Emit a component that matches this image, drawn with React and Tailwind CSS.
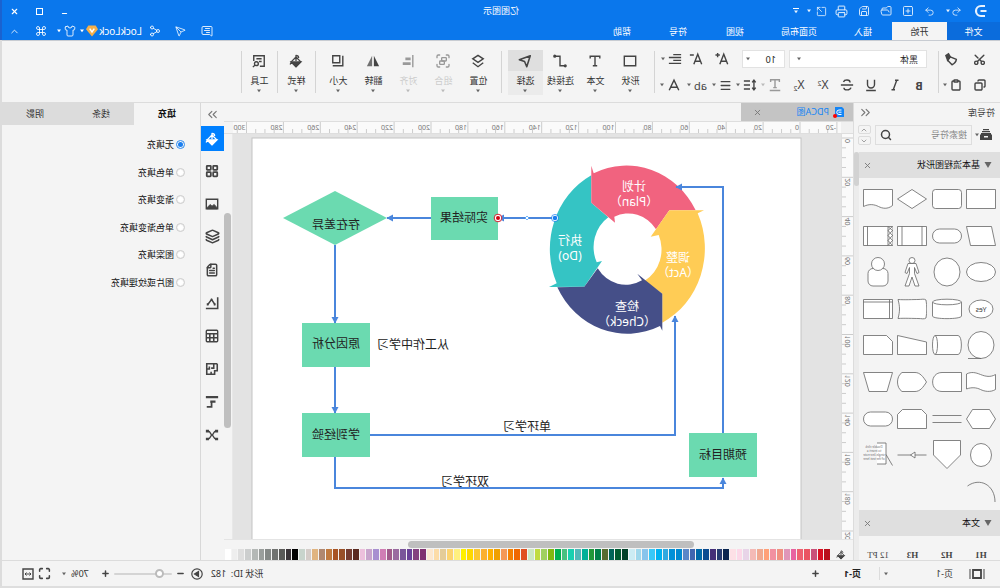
import { useState } from "react";
import {
    Undo2, Redo2, SquarePlus, FolderOpen, Save, Printer, SquareArrowOutUpRight, Minus, Plus, X,
    MessageSquareText, Send, Share2, Shirt, Command, ChevronUp, ChevronDown, ChevronsLeft, ChevronsRight, Scissors, Copy, Clipboard,
    Menu, Layers, Group, Maximize, Search, FileText, LayoutGrid,
} from "lucide-react";

const PALETTE = (
    "b90f1c d90f22 c9507a ea5462 ee6070 e862a0 e096b8 f09080 f290a0 ffa078 f0a890 f4bab6 e8d4e8 fcd8e8 fde0e6 " +
    "0a2550 253a70 452f78 0a4a90 0068a8 4066b0 5a86c8 0088d0 0090d8 30a8e0 00b0f0 38c8f8 88c4ec a0d8ec ccecf4 " +
    "004028 005a30 006458 586c30 008048 209838 00b098 50b8b8 18d0b0 48c080 00b050 80b810 a0d060 c0dc40 cce8c4 " +
    "e05020 f06800 f48000 f49858 f0a000 ffb000 fbb030 fcc830 ffd800 fff000 fff080 fcd470 e4cc98 fcdca8 fce8d0 " +
    "803070 844080 6a4098 7a559a 9a6aa0 a05a8a d07eb4 a890d0 c8a4cc ecc0dc 5a2a20 743c30 985028 a85424 c07a40 " +
    "b08870 e0b480 d4ccc8 c8d4cc 000000 3a3438 5a5a58 707270 848886 9a9e9c b4b8b6 cccece dedede eeeeee ffffff"
).split(" ");

function Caret({ className = "fill-[#666]" }) {
    return (
        <svg viewBox="0 0 6 4" className={`h-1 w-1.5 shrink-0 ${className}`}>
            <path d="M1 .5h4L3 3.2z" />
        </svg>
    );
}

function Logo() {
    return (
        <svg viewBox="0 0 14 14" className="size-3.5 fill-none stroke-white" strokeWidth="2.2">
            <path d="M3 2h4a5 5 0 0 1 0 10H3M1.500 7h6" />
        </svg>
    );
}

function Bucket({ className = "size-3.5" }) {
    return (
        <svg viewBox="0 0 16 16" className={`shrink-0 ${className}`} fill="none" stroke="currentColor" strokeWidth="1.5">
            <path d="M8 3.500 2.500 9 8 14.500 13.500 9zM8 8V1.500c-2 0-3 1-3 3" strokeLinejoin="round" />
            <path d="M2.500 9h11L8 14.500zM13.500 9.500l1.200 2.500" fill="currentColor" />
        </svg>
    );
}

function Painter() {
    return (
        <svg viewBox="0 0 16 16" className="size-3.5" fill="none" stroke="currentColor" strokeWidth="1.7">
            <path d="M3 8.500 10 5.500l3 4-5 5c-2.500-1-4.500-3-5-6zM10 5.500l3 4" strokeLinejoin="round" />
            <path d="M10 5.500 12 2l3 2-2 5.500z" fill="currentColor" />
        </svg>
    );
}

// ---- title bar and menu ----

function TitleBar() {
    const cls = "flex h-full w-[22px] items-center justify-center";
    return (
        <div className="flex h-[22px] items-center text-white">
            <div className="flex flex-1 items-center self-stretch [&_svg]:opacity-90">
                <div className="flex w-[38px] justify-center"><Logo /></div>
                <button aria-label="撤销" className="flex h-full w-[21px] items-center"><Undo2 size={11} strokeWidth={1.8} /><Caret className="fill-white" /></button>
                <button aria-label="重做" className={cls}><Redo2 size={11} strokeWidth={1.8} /></button>
                <button aria-label="新建" className={cls}><SquarePlus size={12} strokeWidth={1.8} /></button>
                <button aria-label="打开" className={cls}><FolderOpen size={12} strokeWidth={1.8} /></button>
                <button aria-label="保存" className={cls}><Save size={12} strokeWidth={1.8} /></button>
                <button aria-label="打印" className={cls}><Printer size={13} strokeWidth={1.8} /></button>
                <button aria-label="导出" className="flex h-full w-[26px] items-center gap-1 pl-1"><SquareArrowOutUpRight size={11} strokeWidth={1.8} /><Caret className="fill-white" /></button>
                <button aria-label="更多" className="flex h-full w-[18px] flex-col items-center justify-center gap-px">
                    <span className="h-px w-1.5 bg-white" />
                    <Caret className="fill-white" />
                </button>
            </div>
            <h1 className="text-[9px]">亿图图示</h1>
            <div className="flex flex-1 justify-end self-stretch">
                <button aria-label="最小化" className="flex w-[25px] items-center justify-center pt-1"><Minus size={7} strokeWidth={4} /></button>
                <button aria-label="最大化" className="flex w-[25px] items-center justify-center"><span className="size-[7px] border border-white" /></button>
                <button aria-label="关闭" className="flex w-[25px] items-center justify-center"><X size={9} strokeWidth={3} /></button>
            </div>
        </div>
    );
}

function MenuBar() {
    const cls = "flex w-[26px] items-center justify-center";
    return (
        <div className="flex h-[18px] text-[9px] leading-none text-white">
            <button className="w-[53px] bg-[#0b6cdc]">文件</button>
            <button className="w-[55px] bg-[#f4f4f4] text-[#333]">开始</button>
            <button className="w-[58px]">插入</button>
            <button className="w-[70px]">页面布局</button>
            <button className="w-[58px]">视图</button>
            <button className="w-14">符号</button>
            <button className="w-14">帮助</button>
            <div className="ml-auto flex">
                <button aria-label="消息" className={cls}><MessageSquareText size={12} strokeWidth={1.7} /></button>
                <button aria-label="发送" className={cls}><Send size={11} strokeWidth={1.7} /></button>
                <button aria-label="分享" className={cls}><Share2 size={12} strokeWidth={1.7} /></button>
                <button className="flex w-[66px] items-center text-[10px]">
                    LockLock
                    <svg viewBox="0 0 14 13" className="h-3 w-3.5 shrink-0">
                        <path d="M3 .5h8L13.500 4.500 7 12.500.5 4.500z" fill="#f5b04a" />
                        <path d="M4.500 4 7 7.500 9.500 4" fill="none" stroke="#fff" strokeWidth="1.6" />
                    </svg>
                    <Caret className="fill-white" />
                </button>
                <button aria-label="皮肤" className="flex w-[22px] items-center gap-0.5"><Shirt size={12} strokeWidth={1.7} /><Caret className="fill-white" /></button>
                <button aria-label="应用" className={cls}><Command size={12} strokeWidth={1.7} /></button>
                <button aria-label="收起" className={cls}><ChevronUp size={11} strokeWidth={1.8} /></button>
            </div>
        </div>
    );
}

// ---- ribbon ----

function Sep() {
    return <div className="mt-2.5 h-[42px] w-px shrink-0 bg-[#d4d4d4]" />;
}

function Small({ label, children, caret, dim, className = "w-6" }) {
    return (
        <button aria-label={label} className={`flex h-[26px] shrink-0 items-center justify-center gap-0.5 leading-none ${dim ? "text-[#999]" : "text-[#444]"} ${className}`}>
            {children}
            {caret && <Caret className={dim ? "fill-[#bbb]" : "fill-[#666]"} />}
        </button>
    );
}

function Big({ label, icon, active, dim }) {
    return (
        <button className={`flex h-[45px] w-[35px] shrink-0 flex-col items-center text-[9px] leading-none ${active ? "bg-[#ebebeb]" : ""} ${dim ? "text-[#ccc]" : "text-[#333]"}`}>
            <span className={`flex h-[21px] w-full items-center justify-center ${active ? "bg-[#dfdfdf]" : ""} ${dim ? "text-[#999]" : "text-[#444]"}`}>{icon}</span>
            <span className="mt-[5px] mb-1 whitespace-nowrap">{label}</span>
            <Caret className={dim ? "fill-[#bbb]" : "fill-[#666]"} />
        </button>
    );
}

function Glyph({ children }) {
    return (
        <svg viewBox="0 0 16 16" className="size-3.5" fill="none" stroke="currentColor" strokeWidth="1.6">
            {children}
        </svg>
    );
}

function Ribbon() {
    return (
        <div className="flex h-[63px] border-t border-b border-t-[#c8ccd2] border-b-[#dcdcdc] bg-[#f4f4f4]">
            <div className="w-[61px] shrink-0 pt-[5px] pl-1.5">
                <div className="flex">
                    <Small label="剪切" className="w-7"><Scissors size={13} className="-rotate-90" strokeWidth={2.6} /></Small>
                    <Small label="格式刷" className="w-7"><Painter /></Small>
                </div>
                <div className="flex">
                    <Small label="复制" className="w-7"><Copy size={12} strokeWidth={2.8} /></Small>
                    <Small label="粘贴" className="w-7" caret><Clipboard size={12} strokeWidth={2.8} /></Small>
                </div>
            </div>
            <Sep />
            <div className="w-[283px] shrink-0 pt-[5px] pl-[7px]">
                <div className="flex items-center pl-1">
                    <div className="flex h-[18px] w-[138px] items-center border border-[#e2e2e2] bg-white pr-1.5">
                        <select aria-label="字体" className="h-full flex-1 appearance-none pl-2 text-[9px] leading-none text-[#222] outline-none">
                            <option>黑体</option>
                        </select>
                        <Caret />
                    </div>
                    <div className="ml-1 flex h-[18px] w-[43px] items-center border border-[#e2e2e2] bg-white pr-0.5">
                        <select aria-label="字号" className="h-full min-w-0 flex-1 appearance-none pl-2 text-[9px] leading-none text-[#222] outline-none">
                            <option>10</option>
                        </select>
                        <Caret />
                    </div>
                    <div className="flex pl-[7px]">
                        <Small label="增大字号" className="w-[26px]"><Glyph><path d="m1.500 14 4.500-11.500L10.500 14M3 10.500h6M10.500 3.500h5M13 1v5" /></Glyph></Small>
                        <Small label="减小字号" className="w-[26px]"><Glyph><path d="m1.500 14 4.500-11.500L10.500 14M3 10.500h6M10.500 3.500h4.500" /></Glyph></Small>
                        <Small label="对齐方式" className="w-[24px]" caret><Glyph><path d="M1 3h9M1 6.300h14M1 9.600h9M1 13h14" /></Glyph></Small>
                    </div>
                </div>
                <div className="flex text-[12px]">
                    <Small label="加粗"><b className="text-[11px]">B</b></Small>
                    <Small label="斜体"><Glyph><path d="M4 2.500h4M8 13.500h4M6 2.500l4 11" /></Glyph></Small>
                    <Small label="下划线"><Glyph><path d="M4 2v5.500a4 4 0 0 0 8 0V2M2.500 14.300h11" /></Glyph></Small>
                    <Small label="删除线"><Glyph><path d="M12 4.500C11 1.500 4.500 1.500 4.500 5M1 8h14M11.500 11c0 3.500-7 3.500-8 0" /></Glyph></Small>
                    <Small label="上标"><span>X<sup className="text-[7px]">2</sup></span></Small>
                    <Small label="下标"><span>X<sub className="text-[7px]">2</sub></span></Small>
                    <Small label="文字样式" className="ml-[3px] w-[25px]" caret dim><Glyph><path d="M3 4.500V2h10v2.500M8 2v9M6 11h4M2 14.300h12" /></Glyph></Small>
                    <Small label="行距" className="w-[25px]" caret>
                        <Glyph><path d="M3.500 3v10M1.500 5l2-2.500L5.500 5M1.500 11l2 2.500 2-2.500M8 3.500h7M8 8h7M8 12.500h7" /></Glyph>
                    </Small>
                    <Small label="列表" className="w-[25px]" caret><Menu size={13} strokeWidth={2.4} /></Small>
                    <Small label="大小写" className="w-[25px]" caret><span className="text-[11px]">ab</span></Small>
                    <Small label="字体颜色" className="ml-px w-[25px]" caret><Glyph><path d="M2.500 14 8 2.500 13.500 14M4.500 10.500h7" /></Glyph></Small>
                </div>
            </div>
            <Sep />
            <div className="flex w-[152px] shrink-0 pt-[9px] pl-1.5">
                <Big label="形状" icon={<Glyph><path d="M1.500 2.500h13v11h-13z" /></Glyph>} />
                <Big label="文本" icon={<Glyph><path d="M2.500 5V2.500h11V5M8 2.500v11M5.500 13.500h5" /></Glyph>} />
                <Big label="连接线" icon={<Glyph><path d="M3 13.500h5v-11h5" /><circle cx="2" cy="13.500" r="1" fill="currentColor" /><circle cx="14" cy="2.500" r="1" fill="currentColor" /></Glyph>} />
                <Big label="选择" active icon={<Glyph><path d="m2 2 12.500 4.500-6 2-2.500 6z" strokeLinejoin="round" strokeWidth="1.800" /></Glyph>} />
            </div>
            <Sep />
            <div className="flex w-[185px] shrink-0 pt-[9px] pl-[5px]">
                <Big label="位置" icon={<Glyph><path d="m8 1.500 6 4-6 4-6-4zM2 10l6 4.500 6-4.500" /></Glyph>} />
                <Big label="组合" dim icon={<Group size={16} strokeWidth={2} />} />
                <Big label="对齐" dim icon={<Glyph><path d="M2.500 1v14" /><path d="M5 5.500h6M5 11h9" strokeWidth="3" /></Glyph>} />
                <Big label="翻转" icon={<svg viewBox="0 0 16 16" className="size-3.5" fill="currentColor"><path d="M7 2v12H1z" /><path d="M9 2v12h6z" opacity=".75" /></svg>} />
                <Big label="大小" icon={<Glyph><path d="M6 2h8v8H6zM2.500 2v11.500H14" /></Glyph>} />
            </div>
            <Sep />
            <div className="flex w-[37px] shrink-0 justify-center pt-[9px]">
                <Big label="样式" icon={<Bucket />} />
            </div>
            <Sep />
            <div className="flex w-[35px] shrink-0 justify-center pt-[9px]">
                <Big label="工具" icon={<Glyph><path d="M7 14H2V2h12v6M5 5.500h6M5 8.500h3" /><circle cx="11" cy="11" r="2.200" /><path d="m12.500 12.500 2.500 2.500" /></Glyph>} />
            </div>
            <Sep />
        </div>
    );
}

// ---- stencil library ----

const box = <path d="M.5 5.500h29v19H.5z" />;

const STENCILS = [
    ["流程", box],
    ["备用流程", <rect x=".5" y="5.500" width="29" height="19" rx="3" />],
    ["判定", <path d="M15 5.500 29.500 15 15 24.500.5 15z" />],
    ["文档", <path d="M.5 5.500h29v17c-6-3-11-2-15 0s-9 3-14-1z" />],
    ["数据", <path d="M.5 5.500h25l4 19h-25z" transform="translate(30) scale(-1 1)" />],
    ["终结符", <rect x=".5" y="8" width="29" height="14" rx="7" />],
    ["预定义流程", <>{box}<path d="M5 5.500v19M25 5.500v19" /></>],
    ["子流程", <>{box}<path d="M5 5.500v19M25.500 5.500v19M.5 5.500l4.500 4-4.500 5 4.500 5-4.500 5M5 5.500.5 9.500l4.500 5-4.500 5 4.500 5" /></>],
    ["椭圆", <ellipse cx="15" cy="15" rx="14.500" ry="9.500" />],
    ["圆形", <ellipse cx="15" cy="15" rx="13" ry="14" />],
    ["人形", <><circle cx="15" cy="3.500" r="3" /><path d="M11 6.500h8l3 9-2 1-2.500-6v6L22 29h-4l-3-9-3 9H8l4.500-12.500v-6L10 16.500l-2-1z" /></>],
    ["用户", <><rect x="5" y="11.500" width="20" height="17.500" rx="5" /><circle cx="15" cy="7" r="6.500" /></>],
    ["是", <><ellipse cx="15" cy="15" rx="12" ry="9" /><text x="15" y="17.500" textAnchor="middle" fontSize="7" fill="#444" stroke="none">Yes</text></>],
    ["数据库", <><path d="M.5 8v14c0 3.500 29 3.500 29 0V8" /><ellipse cx="15" cy="8" rx="14.500" ry="2.800" /></>],
    ["存储数据", <path d="M1 6c2-1.500 4-.5 8-.5s14 .5 20 0c-2 7-2 12 0 19-6-.5-16 0-20 0s-6 1-8-.5c-1-6-1-12 0-18z" />],
    ["内部存储", <>{box}<path d="M3.500 5.500v19M.5 8h29" /></>],
    ["顺序数据", <><ellipse cx="15" cy="15" rx="13" ry="13.500" /><path d="M15 28.500h13" /></>],
    ["直接数据", <><path d="M27 5.500H4c-4.500 0-4.500 19 0 19h23" /><ellipse cx="27" cy="15" rx="2.500" ry="9.500" /></>],
    ["手动输入", <path d="M.5 12 29.500 5.500v19H.5z" />],
    ["卡片", <path d="M6.500 5.500h23v19H.5v-13z" />],
    ["条带", <path d="M.5 7.500c5 3 10 2 15 0s9-3 14-.5v15c-5-2-10-1.500-14 .5s-10 3-15 0z" />],
    ["延期", <path d="M.5 5.500H20c12.500 0 12.500 19 0 19H.5z" />],
    ["显示", <path d="M.5 15C4 9.500 7 5.500 12 5.500h13c6 4 6 15 0 19H12c-5 0-8-4-11.500-9.500z" />],
    ["手动操作", <path d="M.5 5.500h29l-5.500 19H6z" />],
    ["准备", <path d="M6.500 5.500h17L29.500 15l-6 9.500h-17L.5 15z" />],
    ["并行模式", <path d="M.5 11.500h29M.5 18.500h29" />],
    ["循环界限", <path d="M5.500 5.500h19l5 5v14H.5v-14z" />],
    ["终止", <rect x=".5" y="8" width="29" height="14" rx="7" />],
    ["页内引用", <ellipse cx="15" cy="15" rx="10.500" ry="11.500" />],
    ["跨页引用", <path d="M1.500.5h27V15L15 28.500 1.500 15z" />],
    ["流向", <><path d="M.5 15h29" /><path d="m12 12 4.500 3-4.500 3z" /></>],
    ["注释", <><path d="M16 3H7v21h9M7 14.500.5 25.500" /><g fontSize="3" fill="#666" stroke="none" textAnchor="middle"><text x="19" y="8">Double click</text><text x="19" y="12">to insert a</text><text x="19" y="16">single-line note</text><text x="19" y="20">of the text here</text></g></>],
    ["弧线", <path d="M1 25C1 8 16 0 28.500 9" fill="none" />],
];

function CategoryHead({ title }) {
    return (
        <div className="flex h-[26px] shrink-0 items-center bg-[#dfdfdf] pr-1 pl-2 text-[9px] text-[#111]">
            <svg viewBox="0 0 8 6" className="mr-1 h-1.5 w-2 fill-[#666]"><path d="M.5 0h7L4 6z" /></svg>
            <span>{title}</span>
            <button aria-label={`关闭${title}`} className="ml-auto text-[#777]"><X size={9} strokeWidth={2.4} /></button>
        </div>
    );
}

function SymbolLibrary() {
    return (
        <aside className="flex w-[147px] shrink-0 flex-col border-r border-[#dcdcdc] bg-[#f4f4f4]">
            <div className="flex h-[19px] shrink-0 items-center justify-between pr-1 pl-[5px] text-[9px] text-[#444]">
                符号库
                <button aria-label="收起符号库" className="text-[#777]"><ChevronsLeft size={15} strokeWidth={1.8} /></button>
            </div>
            <div className="flex h-[30px] shrink-0 items-start gap-1 pt-[3px] pr-1 pl-2">
                <button aria-label="选择符号库" className="flex h-5 w-4 items-center">
                    <svg viewBox="0 0 12 12" className="size-3 shrink-0 fill-[#444]"><path d="M3 0h6v1.200H3zM2 2h8v1.200H2zM1 4h10v1.500h1V11H0V5.500h1zM4 7v1.500h4V7z" /></svg>
                    <Caret />
                </button>
                <div className="flex h-5 min-w-0 flex-1 items-center border border-[#dedede] pr-1">
                    <input aria-label="搜索符号" placeholder="搜索符号" className="min-w-0 flex-1 pl-1 text-[9px] outline-none placeholder:text-[#888]" />
                    <Search size={12} strokeWidth={3} className="-scale-x-100 text-[#444]" />
                </div>
                <div className="flex w-[13px] flex-col gap-[2px] text-[#777]">
                    <button aria-label="上一个" className="flex h-[9px] items-center justify-center rounded-xs border border-[#dcdcdc]"><ChevronUp size={8} /></button>
                    <button aria-label="下一个" className="flex h-[9px] items-center justify-center rounded-xs border border-[#dcdcdc]"><ChevronDown size={8} /></button>
                </div>
            </div>
            <div className="flex min-h-0 flex-1">
                <div className="flex min-w-0 flex-1 flex-col">
                    <CategoryHead title="基本流程图形状" />
                    <div className="grid min-h-0 flex-1 grid-cols-4 grid-rows-9 place-items-center px-0.5 pt-[3px]">
                        {STENCILS.map(([name, shape]) => (
                            <svg key={name} viewBox="0 0 30 30" aria-label={name} className="size-[30px] fill-white stroke-[#666]" strokeWidth=".8">{shape}</svg>
                        ))}
                    </div>
                    <CategoryHead title="文本" />
                    <div className="grid h-6 shrink-0 grid-cols-4 items-end px-0.5 text-center font-[Liberation_Serif,serif] text-[9px] leading-[10px] font-bold text-[#444]">
                        <span>H1</span>
                        <span>H2</span>
                        <span>H3</span>
                        <span className="font-normal">12 PT</span>
                    </div>
                </div>
                <div className="w-[5px] bg-[#ececec]"><div className="h-[34px] rounded-full bg-[#d2d2d2]" /></div>
            </div>
        </aside>
    );
}

// ---- canvas ----

function Rulers({ vertical }) {
    const step = vertical ? 39.3 : 36.9;
    const zero = vertical ? 4 : 41;
    const first = vertical ? 0 : -4;
    const last = vertical ? 40 : 61;
    const ticks = Array.from({ length: last - first + 1 }, (_, i) => i + first);
    return (
        <svg className="block size-full" stroke="#ccc" fontSize="7">
            {ticks.map((i) => {
                const at = zero + (i * step) / 4;
                const from = i % 4 ? 7 : 0;
                return vertical
                    ? <line key={i} x1={from} x2="12" y1={at} y2={at} />
                    : <line key={i} y1={from} y2="12" x1={at} x2={at} />;
            })}
            {ticks.filter((i) => i % 4 === 0).map((i) => {
                const at = zero + (i * step) / 4 + 1;
                return (
                    <text key={i} stroke="none" fill="#777" transform={vertical ? `translate(3 ${at}) rotate(90)` : `translate(${at} 8)`}>
                        {i * 5}
                    </text>
                );
            })}
        </svg>
    );
}

function Label({ x, y, children, fill = "#222" }) {
    return <text x={x} y={y + 5} fill={fill} textAnchor="middle">{children}</text>;
}

function Diagram() {
    return (
        <svg className="block size-full" fontSize="12">
            <defs>
                <marker id="arrow" markerUnits="userSpaceOnUse" markerWidth="8" markerHeight="8" refX="6" refY="4" orient="auto">
                    <path d="M0 .5 6.500 4 0 7.500z" fill="#4a86dc" />
                </marker>
            </defs>
            <g transform="translate(-159 -134)">
                <rect x="199" y="138" width="549" height="410" fill="#fff" stroke="#c4c4c4" />

                <g fill="#6bdab0">
                    <path d="M243 433h68v44h-68zM502 197h67v43h-67zM630 323h68v44h-68zM630 413h68v44h-68z" />
                    <path d="M613 218 665 191l52 27-52 27z" />
                </g>

                <path fill="#35c4c4" d="M451 287 443.300 283.300A78 83.500 0 0 0 408.700 175.300V202.700L391.700 217.300A33.500 36 0 0 1 403.300 262.300L398 261 415.700 286.700Z" />
                <path fill="#f1637f" d="M408.700 165.700 406.300 173.300A78 83.500 0 0 0 304.300 210.300H330.700L344 229.300A33.500 36 0 0 1 385.700 216.700L385 222.700 408.700 202.700Z" />
                <path fill="#ffcc55" d="M296 210.300 302.300 213.300A78 83.500 0 0 0 337.700 322.700V293.700L355.300 280.700A33.500 36 0 0 1 341.300 235L349.300 236.700 330.700 210.300Z" />
                <path fill="#454f88" d="M337.700 330.700 340 326A78 83.500 0 0 0 442.700 287.300L415.700 286.700 402.300 268.300A33.500 36 0 0 1 358 280.300L362.700 273.700 337.700 293.700Z" />

                <g fill="none" stroke="#4a86dc" strokeWidth="2">
                    <path d="M277 433V187H324" markerEnd="url(#arrow)" />
                    <path d="M445 218H502" markerEnd="url(#arrow)" />
                    <path d="M569 218H613" markerEnd="url(#arrow)" />
                    <path d="M665 245V323" markerEnd="url(#arrow)" />
                    <path d="M665 367V413" markerEnd="url(#arrow)" />
                    <path d="M630 435H325V316" markerEnd="url(#arrow)" />
                    <path d="M665 457V488H277V478" markerEnd="url(#arrow)" />
                </g>

                <circle cx="445" cy="218" r="2.800" fill="#1a7ff0" stroke="#fff" />
                <circle cx="445" cy="218" r="3.600" fill="none" stroke="#1a7ff0" strokeWidth=".7" />
                <path d="m473 216 2 2-2 2-2-2z" fill="#fff" stroke="#3a9af8" strokeWidth=".7" />
                <circle cx="502" cy="218" r="3.800" fill="#fff" stroke="#d02030" />
                <circle cx="502" cy="218" r="2" fill="#d00010" />

                <Label x={277} y={454}>预期目标</Label>
                <Label x={536} y={217}>实际结果</Label>
                <Label x={664} y={224}>存在差异</Label>
                <Label x={664} y={343}>原因分析</Label>
                <Label x={664} y={434}>学到经验</Label>
                <Label x={587} y={344}>从工作中学习</Label>
                <Label x={473} y={426}>单环学习</Label>
                <Label x={535} y={481}>双环学习</Label>
                <Label x={366} y={186} fill="#fff">计划</Label>
                <Label x={366} y={201} fill="#fff">（Plan）</Label>
                <Label x={430} y={240} fill="#fff">执行</Label>
                <Label x={430} y={255} fill="#fff">(Do)</Label>
                <Label x={373} y={306} fill="#fff">检查</Label>
                <Label x={373} y={321} fill="#fff">（Check）</Label>
                <Label x={322} y={257} fill="#fff">调整</Label>
                <Label x={322} y={272} fill="#fff">（Act）</Label>
            </g>
        </svg>
    );
}

function Workspace() {
    return (
        <main className="flex min-w-0 flex-1 flex-col bg-[#f4f4f4]">
            <div className="flex h-[18px] shrink-0">
                <div className="flex w-[112px] items-center bg-[#c4c4c4] pr-3 pl-2 text-[9px] text-[#1485f5]">
                    <svg viewBox="0 0 12 12" className="mr-1 size-3 shrink-0">
                        <path d="M3 1h7v10H1V3z" fill="#1485f5" />
                        <path d="M3.500 4h2.500a2 2 0 0 1 0 4.500H3.500M3.500 6.200h3" fill="none" stroke="#fff" />
                        <circle cx="10" cy="10" r="2" fill="#f00" />
                    </svg>
                    PDCA图
                    <button aria-label="关闭页签" className="ml-auto text-[#777]"><X size={9} strokeWidth={2.4} /></button>
                </div>
            </div>
            <div className="flex h-[13px] shrink-0 border-y border-[#dedede] bg-[#fafafa]">
                <div className="w-3 bg-[#f0f0f0]" />
                <div className="min-w-0 flex-1"><Rulers /></div>
                <div className="w-[9px] bg-[#f4f4f4]" />
            </div>
            <div className="flex min-h-0 flex-1">
                <div className="w-3 shrink-0 border-r border-[#dedede] bg-[#fafafa]"><Rulers vertical /></div>
                <div className="min-w-0 flex-1 bg-[#e3e3e3]"><Diagram /></div>
                <div className="w-[9px] shrink-0 border-l border-[#e8e8e8] pt-[79px] pl-px">
                    <div className="h-[215px] w-[7px] rounded-full bg-[#bfbfbf]" />
                </div>
            </div>
            <div className="flex h-2.5 shrink-0 items-center border-t border-[#e4e4e4] pl-[159px]">
                <div className="h-[7px] w-[286px] rounded-full bg-[#bfbfbf]" />
            </div>
            <div className="flex h-[11px] shrink-0">
                <div className="flex w-[23px] shrink-0 items-center justify-center text-[#444]"><Bucket className="size-2.5" /></div>
                {PALETTE.map((c) => (
                    <div key={c} className="flex-1 border-r border-[#f4f4f4]" style={{ backgroundColor: `#${c}` }} />
                ))}
            </div>
        </main>
    );
}

// ---- property panel ----

const TOOLS = [
    ["填充", <Bucket />],
    ["符号", <LayoutGrid size={14} strokeWidth={3} />],
    ["图片", <Glyph><path d="M1.500 2.500h13v11h-13z" /><path d="M2 12.500 5.500 8.500 8 10.500l2-2 4 4v1H2z" fill="currentColor" strokeWidth="1" /></Glyph>],
    ["图层", <Layers size={15} strokeWidth={2.5} />],
    ["备注", <FileText size={14} strokeWidth={2.6} />],
    ["图表", <Glyph><path d="M1.500 1.500v12.800H15" strokeWidth="1.800" /><path d="m4.500 10 4-6 4.500 6" /><path d="M4 9.500h2M7.500 4.500h2M12 9.500h2" strokeWidth="2.600" /></Glyph>],
    ["表格", <Glyph><rect x="1.500" y="1.500" width="13" height="13" rx="1" /><path d="M1.500 5.500h13M1.500 10h13M6 5.500v9M10.500 5.500v9" strokeWidth="1.800" /></Glyph>],
    ["平面图", <Glyph><path d="M2 2h12v12H9M2 2v8h3v4h4v-3M6 2v5h3M14 8h-3V5" strokeWidth="1.8" /></Glyph>],
    ["时间线", <Glyph><path d="M1 2.500h14M4 7.500h6" strokeWidth="2.600" /><path d="M8.500 8v5.500H14" strokeWidth="2" /></Glyph>],
    ["关系", <Glyph><path d="M3 3.500c4 0 3 4.500 5 4.500s1-4.500 5-4.500M3 12.500C7 12.500 6 8 8 8s1 4.500 5 4.500" /><path d="M1 3.500h3.500M11.500 3.500H15M1 12.500h3.500M11.500 12.500H15" strokeWidth="3" /></Glyph>],
];

const FILLS = ["无填充", "单色填充", "渐变填充", "单色渐变填充", "图案填充", "图片或纹理填充"];

function PropertyPanel() {
    const [tab, setTab] = useState("填充");
    const [fill, setFill] = useState("无填充");

    return (
        <aside className="flex w-[222px] shrink-0 bg-[#f4f4f4]">
            <div className="flex w-6 shrink-0 flex-col border-r border-[#d8d8d8]">
                <button aria-label="收起面板" className="flex h-[23px] items-center justify-center text-[#777]"><ChevronsRight size={15} strokeWidth={1.8} /></button>
                {TOOLS.map(([name, icon], i) => (
                    <button key={name} aria-label={name} className={`flex items-center justify-center ${i === 0 ? "mb-[3px] h-[25px] bg-[#0080ff] text-white" : "h-[33px] text-[#444]"}`}>
                        {icon}
                    </button>
                ))}
            </div>
            <div className="min-w-0 flex-1">
                <div className="flex h-[22px] bg-[#dcdcdc] text-[9px] text-[#333]">
                    {["填充", "线条", "阴影"].map((name) => (
                        <button key={name} onClick={() => setTab(name)} className={`flex-1 ${tab === name ? "bg-[#f4f4f4] font-bold text-[#111]" : ""}`}>
                            {name}
                        </button>
                    ))}
                </div>
                <div className="mt-[6px] grid h-[165px] grid-rows-6 items-center pl-[15px] text-[9px] leading-none text-[#111]">
                    {FILLS.map((name) => (
                        <label key={name} className="flex items-center gap-0.5">
                            <input
                                type="radio"
                                name="fill"
                                checked={fill === name}
                                onChange={() => setFill(name)}
                                className="size-[9px] appearance-none rounded-full border border-[#ccc] bg-white bg-clip-content p-px checked:border-[#2a8af0] checked:bg-[#1a7ff0]"
                            />
                            {name}
                        </label>
                    ))}
                </div>
            </div>
        </aside>
    );
}

function StatusBar() {
    const [zoom, setZoom] = useState(70);
    return (
        <footer className="flex h-[26px] shrink-0 items-center border-t border-[#dcdcdc] bg-[#f4f4f4] text-[9px] text-[#333]">
            <button aria-label="页面视图" className="ml-[15px] flex w-8 text-[#444]">
                <svg viewBox="0 0 16 10" className="h-2.5 w-4" fill="none" stroke="currentColor">
                    <path d="M1 0v10M15 0v10" /><path d="M4 1h8v8H4z" strokeWidth="1.8" />
                </svg>
            </button>
            <button className="flex w-[74px] items-center justify-between border-r border-[#dcdcdc] pr-[3px]">页-1<Caret /></button>
            <button className="ml-[18px] font-bold text-[#222]">页-1</button>
            <button aria-label="新增页" className="ml-6 text-[#444]"><Plus size={9} strokeWidth={4} /></button>
            <span className="mr-2 ml-auto whitespace-nowrap">形状 ID:&nbsp; 182</span>
            <button aria-label="演示" className="text-[#444]">
                <svg viewBox="0 0 12 12" className="size-3" fill="none" stroke="currentColor" strokeWidth="1.200"><circle cx="6" cy="6" r="5.200" /><path d="M4.500 3.500 8.500 6l-4 2.500z" fill="currentColor" /></svg>
            </button>
            <button aria-label="缩小" className="ml-1.5 text-[#444]"><Minus size={9} strokeWidth={4} /></button>
            <input
                type="range"
                aria-label="缩放"
                min="10"
                max="400"
                value={zoom}
                onChange={(e) => setZoom(Number(e.target.value))}
                className="mx-1 h-0.5 w-[58px] appearance-none rounded bg-[#d4d4d4] [&::-webkit-slider-thumb]:size-[9px] [&::-webkit-slider-thumb]:appearance-none [&::-webkit-slider-thumb]:rounded-full [&::-webkit-slider-thumb]:border-2 [&::-webkit-slider-thumb]:border-[#bbb] [&::-webkit-slider-thumb]:bg-white"
            />
            <button aria-label="放大" className="text-[#444]"><Plus size={9} strokeWidth={4} /></button>
            <button className="ml-3 flex items-center gap-1">{zoom}%<Caret /></button>
            <button aria-label="全屏" className="ml-2.5 text-[#444]"><Maximize size={13} strokeWidth={2.8} /></button>
            <button aria-label="适合宽度" className="mr-5 ml-1 text-[#444]">
                <svg viewBox="0 0 12 12" className="size-3" fill="none" stroke="currentColor" strokeWidth="1.400"><path d="M1 1h10v10H1z" /><path d="M3 6h6M4.500 4.500 3 6l1.500 1.500M7.500 4.500 9 6 7.500 7.500" strokeWidth="1" /></svg>
            </button>
        </footer>
    );
}

export default function App() {
    return (
        <div className="flex h-screen -scale-x-100 flex-col overflow-hidden border-b-2 border-[#dedede] bg-[#f4f4f4] font-['Noto_Sans','Noto_Sans_CJK_SC',sans-serif]">
            <header className="border-r-2 border-[#1a62d0] bg-[#0a77ec]">
                <TitleBar />
                <MenuBar />
            </header>
            <div className="flex min-h-0 flex-1 flex-col border-r-2 border-[#dcdcdc]">
                <Ribbon />
                <div className="flex min-h-0 flex-1">
                    <SymbolLibrary />
                    <Workspace />
                    <PropertyPanel />
                </div>
                <StatusBar />
            </div>
        </div>
    );
}
